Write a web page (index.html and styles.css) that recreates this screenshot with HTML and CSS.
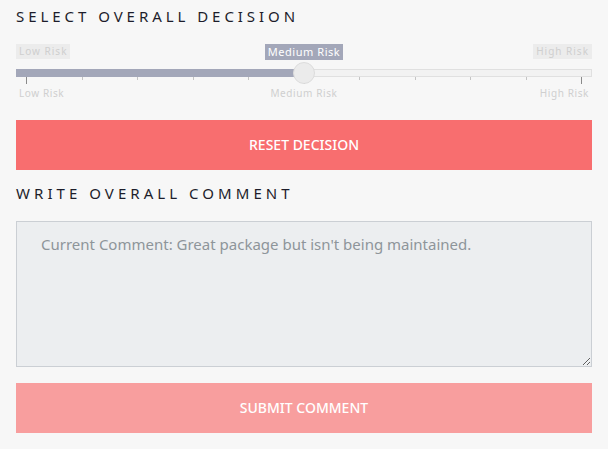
FILE: index.html
```html
<!DOCTYPE html>
<html>
<head>
<meta charset="utf-8">
<link rel="stylesheet" href="styles.css">
</head>
<body>
<div class="panel">
  <h2 class="title">SELECT OVERALL DECISION</h2>
  <div class="slider">
    <div class="chips">
      <span class="chip chip-min">Low Risk</span>
      <span class="chip chip-val">Medium Risk</span>
      <span class="chip chip-max">High Risk</span>
    </div>
    <div class="track">
      <div class="fill" style="width:50%"></div>
      <div class="handle" style="left:50%"></div>
    </div>
    <div class="ticks">
      <span class="tick big"></span><span class="tick"></span><span class="tick"></span><span class="tick"></span><span class="tick"></span><span class="tick big"></span><span class="tick"></span><span class="tick"></span><span class="tick"></span><span class="tick"></span><span class="tick big"></span>
    </div>
    <div class="grid-labels">
      <span class="gl gl-min">Low Risk</span>
      <span class="gl gl-mid">Medium Risk</span>
      <span class="gl gl-max">High Risk</span>
    </div>
  </div>
  <button class="btn btn-reset">RESET DECISION</button>
  <h2 class="title title-2">WRITE OVERALL COMMENT</h2>
  <textarea class="comment" placeholder="Current Comment: Great package but isn't being maintained."></textarea>
  <button class="btn btn-submit">SUBMIT COMMENT</button>
</div>
</body>
</html>
```
FILE: styles.css
```css
html, body {
  margin: 0;
  padding: 0;
  background: #f7f7f7;
}
.panel {
  padding: 6px 16px 0 16px;
  font-family: "Noto Sans", "Open Sans", sans-serif;
}
.title {
  margin: 0;
  font-family: "Noto Sans", sans-serif;
  font-weight: 400;
  font-size: 15px;
  line-height: 20px;
  letter-spacing: 3.95px;
  color: #1d1d2b;
}
.slider {
  margin-top: 18px;
}
.chips {
  display: grid;
  grid-template-columns: 1fr auto 1fr;
  align-items: start;
}
.chip {
  font-size: 10px;
  line-height: 15px;
  padding: 0 3px 0 3px;
  letter-spacing: 1px;
  color: #cfcfcf;
  background: #ececec;
}
.chip-min { justify-self: start; }
.chip-val {
  justify-self: center;
  font-size: 11px;
  line-height: 16px;
  color: #fff;
  background: #a3a7b9;
  padding: 0 3px;
  letter-spacing: 0.55px;
}
.chip-max { justify-self: end; }
.track {
  position: relative;
  margin-top: 9px;
  height: 6px;
  background: #f2f2f2;
  border: 1px solid #e0e0e0;
}
.fill {
  height: 8px;
  margin: -1px 0 0 -1px;
  background: #a3a7b9;
}
.handle {
  position: absolute;
  top: -8px;
  width: 20px;
  height: 20px;
  margin-left: -11px;
  border-radius: 50%;
  background: #ebebeb;
  border: 1px solid #dcdcdc;
}
.ticks {
  display: flex;
  justify-content: space-between;
  align-items: flex-start;
  padding: 0 10px 0 10px;
}
.tick {
  width: 1px;
  height: 3px;
  background: #c4c4c4;
}
.tick.big {
  height: 7px;
  background: #8a8a8a;
}
.grid-labels {
  display: grid;
  grid-template-columns: 1fr auto 1fr;
  padding: 0 3px;
  margin-top: 2px;
  font-size: 10px;
  line-height: 14px;
  letter-spacing: 0.6px;
  color: #cfcfcf;
}
.gl-min { justify-self: start; }
.gl-mid { justify-self: center; }
.gl-max { justify-self: end; }
.btn {
  display: block;
  width: 100%;
  height: 50px;
  border: 0;
  padding: 0 0 2px 0;
  font-family: "Noto Sans", sans-serif;
  font-size: 14px;
  font-weight: 500;
  color: #fff;
}
.btn-reset {
  margin-top: 20px;
  background: #f86e6f;
}
.title-2 {
  margin-top: 13px;
  letter-spacing: 4.05px;
}
.comment {
  display: block;
  box-sizing: border-box;
  width: 100%;
  height: 146px;
  margin-top: 18px;
  padding: 12px 24px;
  background: #eceef0;
  border: 1px solid #cbcfd4;
  font-family: "Noto Sans", sans-serif;
  font-size: 15px;
  line-height: 20px;
  color: #333;
  outline: none;
}
.comment::placeholder {
  color: #8e959a;
}
.btn-submit {
  margin-top: 16px;
  background: #f89e9e;
}
```
